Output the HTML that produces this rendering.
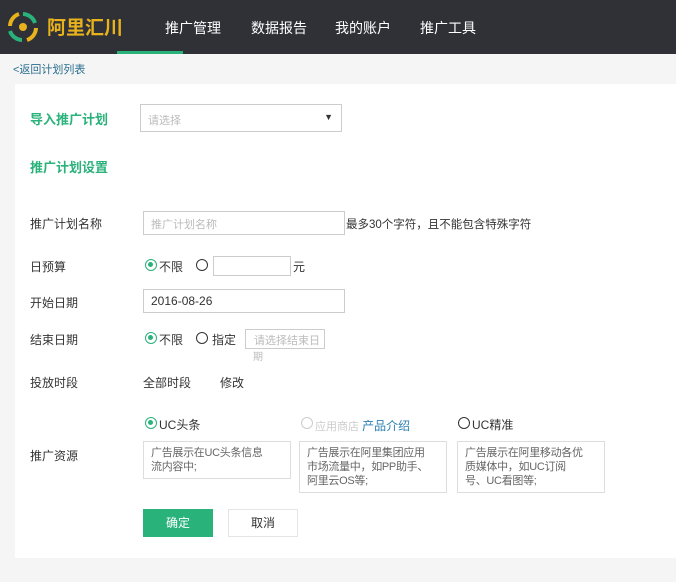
<!DOCTYPE html><html><head><meta charset="utf-8"><style>
body{margin:0;width:676px;height:582px;background:#f5f5f5;font-family:"Liberation Sans","Noto Sans CJK SC",sans-serif;font-size:12px;color:#333;position:relative;overflow:hidden}
.a{position:absolute;white-space:nowrap}
.hd{position:absolute;left:0;top:0;width:676px;height:54px;background:#2f3137}
.nav{position:absolute;top:18px;color:#fff;font-size:14px}
.card{position:absolute;left:15px;top:84px;width:661px;height:474px;background:#fff}
.inp{position:absolute;border:1px solid #ccc;background:#fff;height:24px;box-sizing:border-box;font-size:11px;color:#bbb;padding:4px 7px;white-space:nowrap;overflow:hidden}
.rad{position:absolute;width:12px;height:12px;border:1.5px solid #333;border-radius:50%;box-sizing:border-box}
.rad.on{border-color:#2ab27b}.rad.on:after{content:"";position:absolute;left:2px;top:2px;width:5px;height:5px;border-radius:50%;background:#2ab27b}
.box{position:absolute;border:1px solid #ddd;font-size:11px;letter-spacing:-0.3px;color:#666;line-height:14px;padding:4px 7px;box-sizing:border-box;white-space:nowrap}
.g{color:#2ab27b;font-weight:bold;font-size:13px}
</style></head><body>
<div class="hd">
<svg class="a" style="left:6px;top:10px" width="34" height="34" viewBox="0 0 34 34"><g fill="none" stroke-width="4"><path d="M17 4a13 13 0 0 1 12 9" stroke="#2ab27b"/><path d="M30 18a13 13 0 0 1-9 12" stroke="#e8b21c"/><path d="M16 30a13 13 0 0 1-12-9" stroke="#2ab27b"/><path d="M4 16a13 13 0 0 1 9-12" stroke="#e8b21c"/></g><circle cx="17" cy="17" r="4" fill="#e8b21c"/></svg>
<div class="a" style="left:47px;top:13px;color:#e8b21c;font-size:19px;font-weight:bold">阿里汇川</div>
<div class="nav" style="left:165px">推广管理</div><div class="nav" style="left:251px">数据报告</div><div class="nav" style="left:335px">我的账户</div><div class="nav" style="left:420px">推广工具</div>
<div class="a" style="left:117px;top:51px;width:66px;height:3px;background:#2ab27b"></div>
</div>
<div class="a" style="left:13px;top:61px;color:#2a6f8f;font-size:11px">&lt;返回计划列表</div>
<div class="card"></div>
<div class="a g" style="left:30px;top:109px">导入推广计划</div>
<div class="inp" style="left:140px;top:104px;width:202px;height:28px;padding-top:7px">请选择<span style="position:absolute;right:8px;top:7px;color:#333;font-size:9px">▼</span></div>
<div class="a g" style="left:30px;top:157px">推广计划设置</div>
<div class="a" style="left:30px;top:215px">推广计划名称</div>
<div class="inp" style="left:143px;top:211px;width:202px">推广计划名称</div>
<div class="a" style="left:346px;top:216px;font-size:11.5px">最多30个字符，且不能包含特殊字符</div>
<div class="a" style="left:30px;top:258px">日预算</div>
<div class="rad on" style="left:145px;top:259px"></div><div class="a" style="left:159px;top:258px">不限</div>
<div class="rad" style="left:196px;top:259px"></div>
<div class="inp" style="left:213px;top:256px;width:78px;height:20px"></div><div class="a" style="left:293px;top:258px">元</div>
<div class="a" style="left:30px;top:294px">开始日期</div>
<div class="inp" style="left:143px;top:289px;width:202px;color:#333;font-size:12px">2016-08-26</div>
<div class="a" style="left:30px;top:331px">结束日期</div>
<div class="rad on" style="left:145px;top:332px"></div><div class="a" style="left:159px;top:331px">不限</div>
<div class="rad" style="left:196px;top:332px"></div><div class="a" style="left:212px;top:331px">指定</div>
<div class="inp" style="left:245px;top:329px;width:80px;height:20px;padding:2px 8px">请选择结束日</div>
<div class="a" style="left:253px;top:348px;font-size:10px;color:#bbb">期</div>
<div class="a" style="left:30px;top:374px">投放时段</div>
<div class="a" style="left:143px;top:374px">全部时段</div><div class="a" style="left:220px;top:374px">修改</div>
<div class="rad on" style="left:145px;top:417px"></div><div class="a" style="left:159px;top:416px">UC头条</div>
<div class="rad" style="left:301px;top:417px;border-color:#ccc"></div><div class="a" style="left:315px;top:417px;color:#ccc;font-size:11px">应用商店 <span style="color:#2a7fb0;font-size:12px">产品介绍</span></div>
<div class="rad" style="left:458px;top:417px"></div><div class="a" style="left:472px;top:416px">UC精准</div>
<div class="a" style="left:30px;top:447px">推广资源</div>
<div class="box" style="left:143px;top:441px;width:148px;height:38px">广告展示在UC头条信息<br>流内容中;</div>
<div class="box" style="left:299px;top:441px;width:148px;height:52px">广告展示在阿里集团应用<br>市场流量中，如PP助手、<br>阿里云OS等;</div>
<div class="box" style="left:457px;top:441px;width:148px;height:52px">广告展示在阿里移动各优<br>质媒体中，如UC订阅<br>号、UC看图等;</div>
<div class="a" style="left:143px;top:509px;width:70px;height:28px;background:#2ab27b;color:#fff;text-align:center;line-height:28px">确定</div>
<div class="a" style="left:228px;top:509px;width:70px;height:28px;border:1px solid #e5e5e5;box-sizing:border-box;text-align:center;line-height:26px">取消</div>
</body></html>
